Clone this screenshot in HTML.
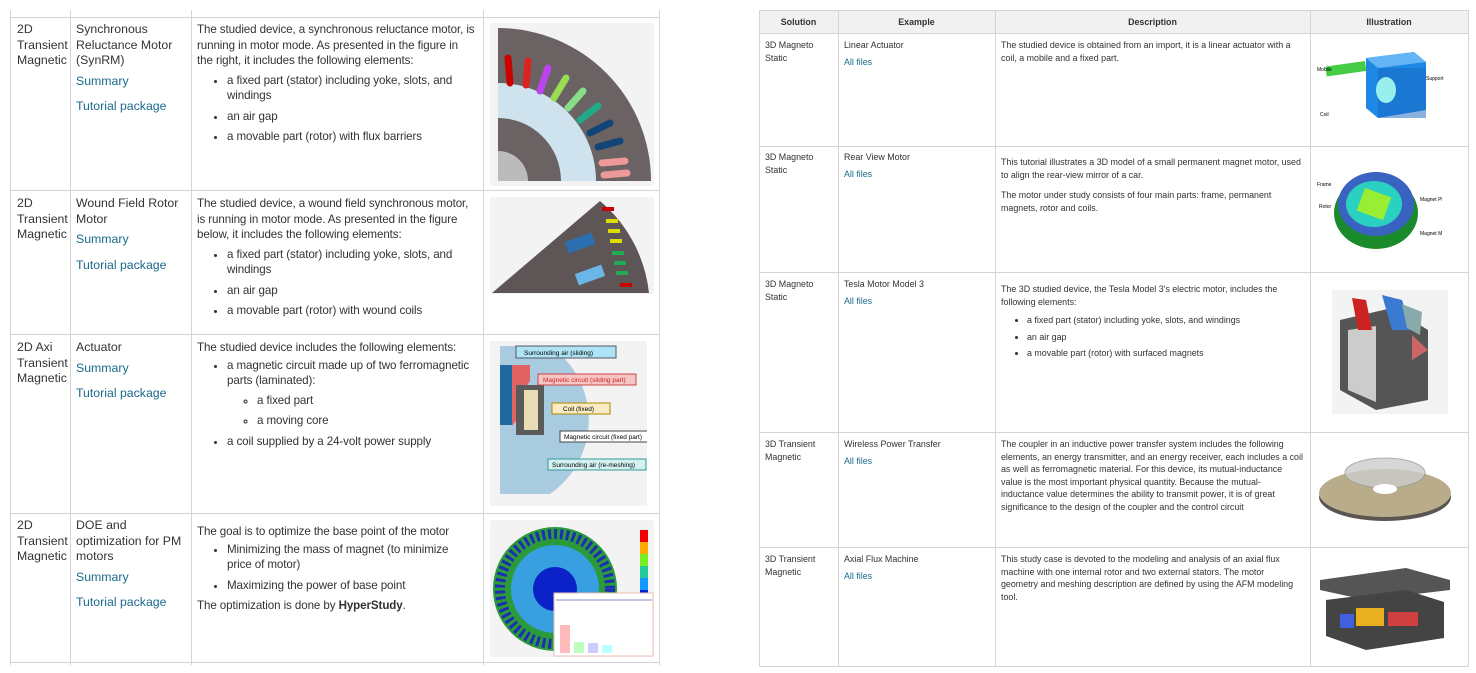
<!DOCTYPE html>
<html><head><meta charset="utf-8"><style>
body{margin:0;width:1476px;height:673px;background:#fff;position:relative;overflow:hidden;font-family:"Liberation Sans",sans-serif}
.a{position:absolute}
.l{font-size:12.3px;line-height:15.5px;color:#333;letter-spacing:0px}
.d{white-space:nowrap;font-size:11.6px;letter-spacing:-0.1px}
.l a,.r a{color:#1a6a8a;text-decoration:none}
.r{font-family:"Liberation Sans",sans-serif;font-size:8.9px;line-height:12.5px;color:#333}
.vl{position:absolute;width:1px;background:#d4d4d4}
.hl{position:absolute;height:1px;background:#d4d4d4}
ul{margin:4px 0 0;padding-left:30px}
li{margin-bottom:5px}
.r ul{padding-left:26px;margin-top:6px}.r li{margin-bottom:4px}
p{margin:0}
</style></head><body>
<div class="vl" style="left:10px;top:10px;height:655px"></div>
<div class="vl" style="left:70px;top:10px;height:655px"></div>
<div class="vl" style="left:191px;top:10px;height:655px"></div>
<div class="vl" style="left:483px;top:10px;height:655px"></div>
<div class="vl" style="left:659px;top:10px;height:655px"></div>
<div class="hl" style="left:10px;top:17px;width:650px"></div>
<div class="hl" style="left:10px;top:190px;width:650px"></div>
<div class="hl" style="left:10px;top:334px;width:650px"></div>
<div class="hl" style="left:10px;top:513px;width:650px"></div>
<div class="hl" style="left:10px;top:662px;width:650px"></div>

<div class="a l" style="left:17px;top:22px;width:54px">2D Transient Magnetic</div>
<div class="a l" style="left:76px;top:22px;width:112px">Synchronous Reluctance Motor (SynRM)<p style="margin-top:5px"><a>Summary</a></p><p style="margin-top:10px"><a>Tutorial package</a></p></div>
<div class="a l d" style="left:197px;top:22px">The studied device, a synchronous reluctance motor, is<br>running in motor mode. As presented in the figure in<br>the right, it includes the following elements:<ul><li>a fixed part (stator) including yoke, slots, and<br>windings</li><li>an air gap</li><li>a movable part (rotor) with flux barriers</li></ul></div>

<div class="a l" style="left:17px;top:196px;width:54px">2D Transient Magnetic</div>
<div class="a l" style="left:76px;top:196px;width:112px">Wound Field Rotor Motor<p style="margin-top:5px"><a>Summary</a></p><p style="margin-top:10px"><a>Tutorial package</a></p></div>
<div class="a l d" style="left:197px;top:196px">The studied device, a wound field synchronous motor,<br>is running in motor mode. As presented in the figure<br>below, it includes the following elements:<ul><li>a fixed part (stator) including yoke, slots, and<br>windings</li><li>an air gap</li><li>a movable part (rotor) with wound coils</li></ul></div>

<div class="a l" style="left:17px;top:340px;width:54px">2D Axi Transient Magnetic</div>
<div class="a l" style="left:76px;top:340px;width:112px">Actuator<p style="margin-top:5px"><a>Summary</a></p><p style="margin-top:10px"><a>Tutorial package</a></p></div>
<div class="a l d" style="left:197px;top:340px">The studied device includes the following elements:<ul style="margin-top:2px"><li>a magnetic circuit made up of two ferromagnetic<br>parts (laminated):<ul style="list-style:circle;margin-top:4px"><li>a fixed part</li><li>a moving core</li></ul></li><li>a coil supplied by a 24-volt power supply</li></ul></div>

<div class="a l" style="left:17px;top:518px;width:54px">2D Transient Magnetic</div>
<div class="a l" style="left:76px;top:518px;width:112px">DOE and optimization for PM motors<p style="margin-top:5px"><a>Summary</a></p><p style="margin-top:10px"><a>Tutorial package</a></p></div>
<div class="a l d" style="left:197px;top:524px">The goal is to optimize the base point of the motor<ul style="margin-top:2px"><li>Minimizing the mass of magnet (to minimize<br>price of motor)</li><li>Maximizing the power of base point</li></ul><p>The optimization is done by <b>HyperStudy</b>.</p></div>

<svg class="a" style="left:490px;top:23px" width="164" height="163"><rect width="164" height="163" rx="3" fill="#f3f3f3"/><path d="M8 158 L8 5 A153 153 0 0 1 161 158 Z" fill="#6b6363"/><path d="M8 158 L8 60 A98 98 0 0 1 106 158 Z" fill="#cfe3ee"/><path d="M8 158 L8 95 A63 63 0 0 1 71 158Z" fill="#6b6363"/><path d="M8 158 L8 128 A30 30 0 0 1 38 158Z" fill="#bbb"/>
<g stroke-width="7" stroke-linecap="round"><line x1="18" y1="35" x2="20" y2="60" stroke="#c00"/><line x1="38" y1="38" x2="36" y2="62" stroke="#d22"/><line x1="58" y1="45" x2="50" y2="68" stroke="#b4e"/><line x1="76" y1="55" x2="64" y2="75" stroke="#9d5"/><line x1="93" y1="68" x2="78" y2="85" stroke="#8d8"/><line x1="108" y1="83" x2="90" y2="97" stroke="#2a8"/><line x1="120" y1="100" x2="100" y2="110" stroke="#147"/><line x1="130" y1="118" x2="108" y2="124" stroke="#147"/><line x1="135" y1="138" x2="112" y2="140" stroke="#e99"/><line x1="137" y1="150" x2="114" y2="152" stroke="#e99"/></g></svg>
<svg class="a" style="left:490px;top:197px" width="164" height="97"><rect width="164" height="97" rx="3" fill="#f3f3f3"/><path d="M2 96 L110 4 A140 140 0 0 1 159 96Z" fill="#5e5656"/><g fill="#c00"><rect x="112" y="10" width="12" height="4"/><rect x="130" y="86" width="12" height="4"/></g><g fill="#dd0"><rect x="116" y="22" width="12" height="4"/><rect x="118" y="32" width="12" height="4"/><rect x="120" y="42" width="12" height="4"/></g><g fill="#2a5"><rect x="122" y="54" width="12" height="4"/><rect x="124" y="64" width="12" height="4"/><rect x="126" y="74" width="12" height="4"/></g><rect x="76" y="40" width="28" height="12" fill="#2a6fb0" transform="rotate(-20 90 46)"/><rect x="86" y="72" width="28" height="12" fill="#6ab6e6" transform="rotate(-20 100 78)"/></svg>
<svg class="a" style="left:490px;top:341px" width="157" height="165" font-family="Liberation Sans" font-size="6.5"><rect width="157" height="165" fill="#f3f3f3"/><path d="M10 5 L60 5 A90 90 0 0 1 60 153 L10 153Z" fill="#a9cbe0"/><rect x="10" y="24" width="12" height="60" fill="#1e6aa0"/><path d="M22 24 L40 24 L40 40 L30 55 L30 75 L22 85Z" fill="#e26262"/><rect x="26" y="44" width="28" height="50" fill="#5a5a5a"/><rect x="34" y="49" width="14" height="40" fill="#e9dcb4"/><rect x="26" y="5" width="100" height="12" fill="#aee3f6" stroke="#556"/><text x="34" y="14">Surrounding air (sliding)</text><rect x="48" y="33" width="98" height="11" fill="#f6c6c6" stroke="#c44"/><text x="53" y="41" fill="#c22">Magnetic circuit (sliding part)</text><rect x="62" y="62" width="58" height="11" fill="#fbebc4" stroke="#a80"/><text x="73" y="70">Coil (fixed)</text><rect x="70" y="90" width="98" height="11" fill="#fff" stroke="#444"/><text x="74" y="98">Magnetic circuit (fixed part)</text><rect x="58" y="118" width="98" height="11" fill="#d3f1f1" stroke="#399"/><text x="62" y="126">Surrounding air (re-meshing)</text></svg>
<svg class="a" style="left:490px;top:520px" width="164" height="137"><rect width="164" height="137" rx="3" fill="#f3f3f3"/><circle cx="65" cy="69" r="62" fill="#2b9a3a"/><circle cx="65" cy="69" r="55" fill="none" stroke="#1d2fb0" stroke-width="10" stroke-dasharray="3 3"/><circle cx="65" cy="69" r="44" fill="#38a0e0"/><circle cx="65" cy="69" r="22" fill="#0a22c8"/><rect x="150" y="10" width="8" height="12" fill="#e00"/><rect x="150" y="22" width="8" height="12" fill="#fa0"/><rect x="150" y="34" width="8" height="12" fill="#7e2"/><rect x="150" y="46" width="8" height="12" fill="#2c9"/><rect x="150" y="58" width="8" height="12" fill="#19f"/><rect x="150" y="70" width="8" height="10" fill="#02c"/><rect x="64" y="73" width="99" height="63" fill="#fff" stroke="#e8c0b0"/><rect x="70" y="105" width="10" height="28" fill="#fbb"/><rect x="84" y="122" width="10" height="11" fill="#bfb"/><rect x="98" y="123" width="10" height="10" fill="#ccf"/><rect x="112" y="125" width="10" height="8" fill="#bff"/><line x1="66" y1="80" x2="162" y2="80" stroke="#88c"/></svg>

<div class="a" style="left:759px;top:10px;width:709px;height:23px;background:#f1f1f1"></div>
<div class="vl" style="left:759px;top:10px;height:657px"></div>
<div class="vl" style="left:838px;top:10px;height:657px"></div>
<div class="vl" style="left:995px;top:10px;height:657px"></div>
<div class="vl" style="left:1310px;top:10px;height:657px"></div>
<div class="vl" style="left:1468px;top:10px;height:657px"></div>
<div class="hl" style="left:759px;top:10px;width:710px"></div>
<div class="hl" style="left:759px;top:33px;width:710px"></div>
<div class="hl" style="left:759px;top:146px;width:710px"></div>
<div class="hl" style="left:759px;top:272px;width:710px"></div>
<div class="hl" style="left:759px;top:432px;width:710px"></div>
<div class="hl" style="left:759px;top:547px;width:710px"></div>
<div class="hl" style="left:759px;top:666px;width:710px"></div>
<div class="a r" style="left:759px;top:16px;width:79px;text-align:center;font-weight:bold">Solution</div>
<div class="a r" style="left:838px;top:16px;width:157px;text-align:center;font-weight:bold">Example</div>
<div class="a r" style="left:995px;top:16px;width:315px;text-align:center;font-weight:bold">Description</div>
<div class="a r" style="left:1310px;top:16px;width:158px;text-align:center;font-weight:bold">Illustration</div>

<div class="a r" style="left:765px;top:39px;width:70px">3D Magneto Static</div>
<div class="a r" style="left:844px;top:39px">Linear Actuator<p style="margin-top:4px"><a>All files</a></p></div>
<div class="a r" style="left:1001px;top:39px;width:302px">The studied device is obtained from an import, it is a linear actuator with a coil, a mobile and a fixed part.</div>

<div class="a r" style="left:765px;top:151px;width:70px">3D Magneto Static</div>
<div class="a r" style="left:844px;top:151px">Rear View Motor<p style="margin-top:4px"><a>All files</a></p></div>
<div class="a r" style="left:1001px;top:156px;width:302px">This tutorial illustrates a 3D model of a small permanent magnet motor, used to align the rear-view mirror of a car.<p style="margin-top:8px">The motor under study consists of four main parts: frame, permanent magnets, rotor and coils.</p></div>

<div class="a r" style="left:765px;top:278px;width:70px">3D Magneto Static</div>
<div class="a r" style="left:844px;top:278px">Tesla Motor Model 3<p style="margin-top:4px"><a>All files</a></p></div>
<div class="a r" style="left:1001px;top:283px;width:302px">The 3D studied device, the Tesla Model 3's electric motor, includes the following elements:<ul><li>a fixed part (stator) including yoke, slots, and windings</li><li>an air gap</li><li>a movable part (rotor) with surfaced magnets</li></ul></div>

<div class="a r" style="left:765px;top:438px;width:70px">3D Transient Magnetic</div>
<div class="a r" style="left:844px;top:438px">Wireless Power Transfer<p style="margin-top:4px"><a>All files</a></p></div>
<div class="a r" style="left:1001px;top:438px;width:302px">The coupler in an inductive power transfer system includes the following elements, an energy transmitter, and an energy receiver, each includes a coil as well as ferromagnetic material. For this device, its mutual-inductance value is the most important physical quantity. Because the mutual-inductance value determines the ability to transmit power, it is of great significance to the design of the coupler and the control circuit</div>

<div class="a r" style="left:765px;top:553px;width:70px">3D Transient Magnetic</div>
<div class="a r" style="left:844px;top:553px">Axial Flux Machine<p style="margin-top:4px"><a>All files</a></p></div>
<div class="a r" style="left:1001px;top:553px;width:302px">This study case is devoted to the modeling and analysis of an axial flux machine with one internal rotor and two external stators. The motor geometry and meshing description are defined by using the AFM modeling tool.</div>

<svg class="a" style="left:1314px;top:40px" width="130" height="100" font-family="Liberation Sans" font-size="5"><rect width="130" height="100" fill="#fff"/><path d="M52 18 L100 12 L112 22 L112 70 L64 78 L52 68Z" fill="#1e88e5"/><path d="M52 18 L100 12 L112 22 L64 28Z" fill="#64b5f6"/><rect x="64" y="28" width="48" height="50" fill="#1565c0" opacity=".5"/><ellipse cx="72" cy="50" rx="10" ry="13" fill="#9ee"/><rect x="12" y="24" width="40" height="10" fill="#4c4" transform="rotate(-8 30 30)"/><text x="3" y="31">Mobile</text><text x="112" y="40">Support</text><text x="6" y="76">Coil</text></svg>
<svg class="a" style="left:1316px;top:158px" width="126" height="95" font-family="Liberation Sans" font-size="5"><rect width="126" height="95" fill="#fff"/><ellipse cx="60" cy="55" rx="42" ry="36" fill="#1a8a2a"/><ellipse cx="60" cy="46" rx="38" ry="32" fill="#3a62c0"/><ellipse cx="58" cy="46" rx="28" ry="23" fill="#2ad0c0"/><rect x="44" y="34" width="28" height="24" fill="#9e3" transform="rotate(20 58 46)"/><text x="1" y="28">Frame</text><text x="3" y="50">Rotor</text><text x="104" y="43">Magnet Plus</text><text x="104" y="77">Magnet Minus</text></svg>
<svg class="a" style="left:1332px;top:290px" width="116" height="124"><rect width="116" height="124" fill="#f3f3f3"/><path d="M8 30 L60 18 L96 40 L96 110 L44 120 L8 100Z" fill="#555"/><path d="M16 40 L44 36 L44 112 L16 100Z" fill="#ccc"/><path d="M20 8 L34 10 L40 40 L26 40Z" fill="#c22"/><path d="M50 5 L70 10 L80 40 L60 40Z" fill="#3a7ad0"/><path d="M70 14 L90 22 L88 45 L75 38Z" fill="#8aa"/><path d="M80 45 L96 60 L80 70Z" fill="#c66"/></svg>
<svg class="a" style="left:1316px;top:445px" width="138" height="85"><rect width="138" height="85" fill="#fff"/><ellipse cx="69" cy="52" rx="66" ry="24" fill="#5a5550"/><ellipse cx="69" cy="48" rx="66" ry="24" fill="#b9ac8a"/><ellipse cx="69" cy="28" rx="40" ry="15" fill="#ccc" opacity=".8" stroke="#999"/><ellipse cx="69" cy="44" rx="12" ry="5" fill="#fff"/></svg>
<svg class="a" style="left:1316px;top:560px" width="138" height="92"><rect width="138" height="92" fill="#fff"/><path d="M4 20 L90 8 L134 20 L134 30 L50 40 L4 30Z" fill="#555"/><path d="M10 40 L90 30 L128 42 L128 78 L50 90 L10 76Z" fill="#444"/><rect x="40" y="48" width="28" height="18" fill="#e8b020"/><rect x="72" y="52" width="30" height="14" fill="#d04040"/><rect x="24" y="54" width="14" height="14" fill="#4060e0"/></svg>
</body></html>
